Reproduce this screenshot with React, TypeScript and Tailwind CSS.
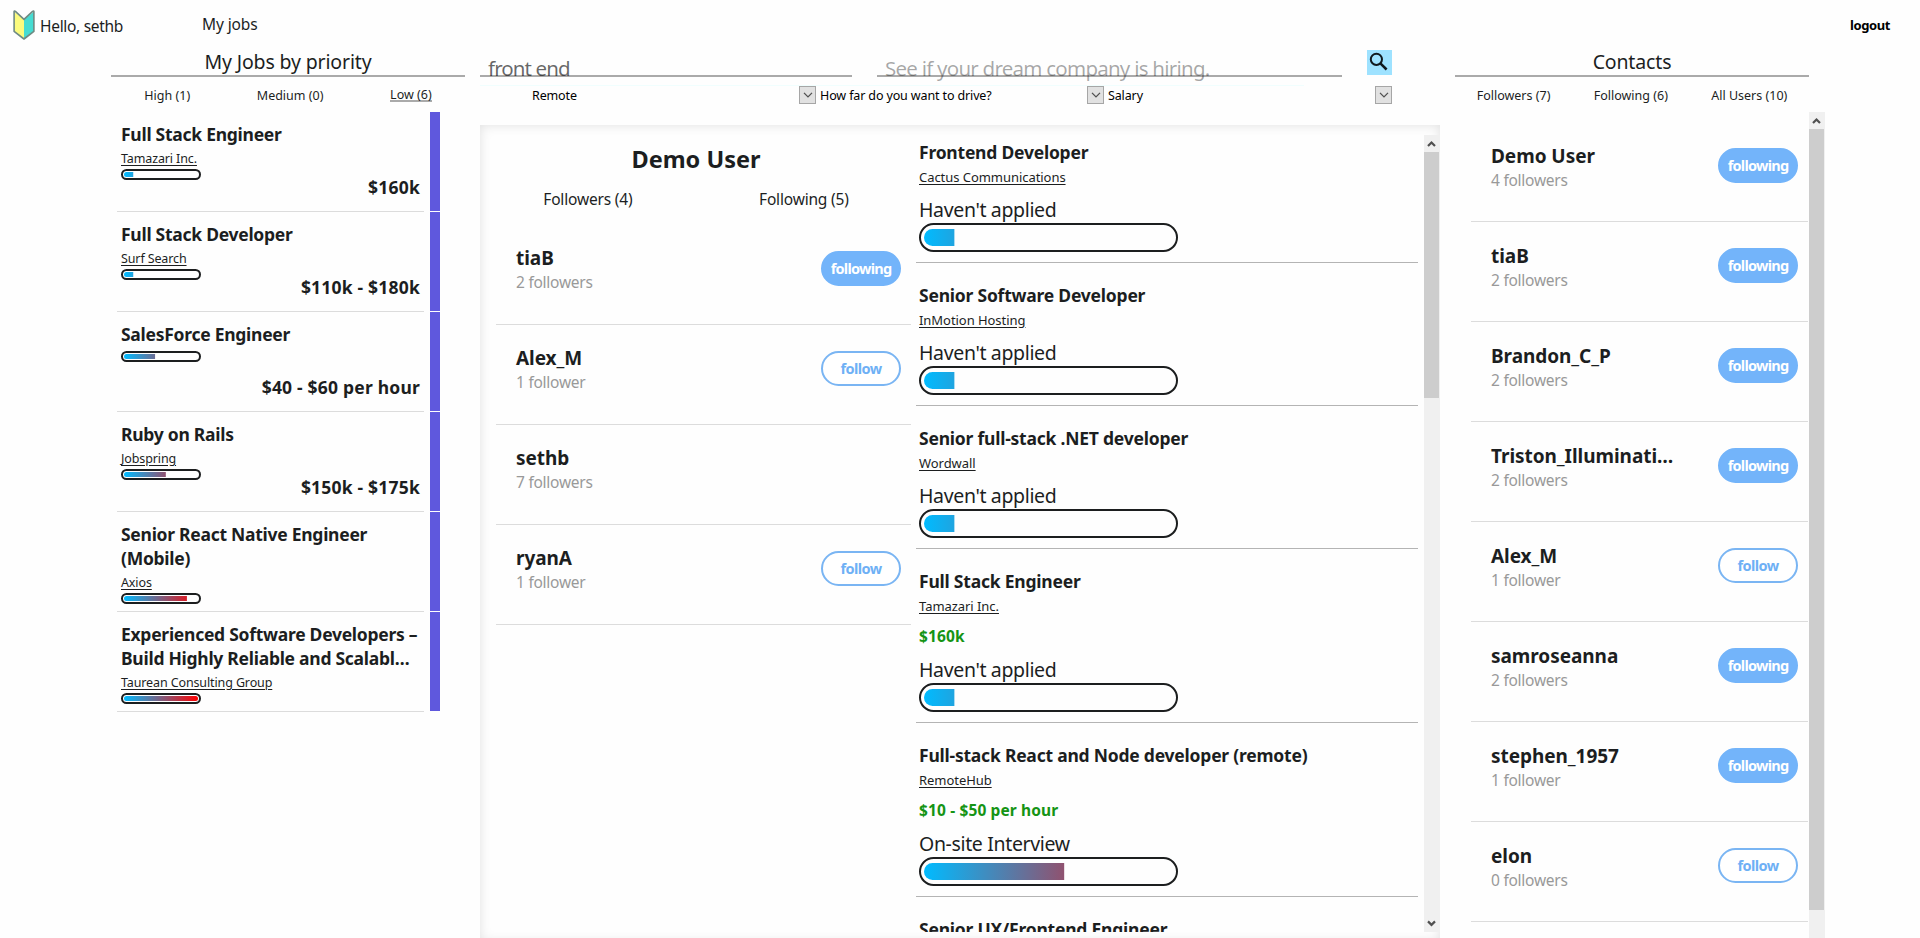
import React from "react";

type Job = { title: string; company?: string; salary?: string; progress: number; status?: string };
type Person = { name: string; followers: string; state?: "following" | "follow" };

const myJobs: Job[] = [
  { title: "Full Stack Engineer", company: "Tamazari Inc.", salary: "$160k", progress: 12.5 },
  { title: "Full Stack Developer", company: "Surf Search", salary: "$110k - $180k", progress: 12.5 },
  { title: "SalesForce Engineer", salary: "$40 - $60 per hour", progress: 42 },
  { title: "Ruby on Rails", company: "Jobspring", salary: "$150k - $175k", progress: 56.5 },
  { title: "Senior React Native Engineer (Mobile)", company: "Axios", progress: 85 },
  {
    title: "Experienced Software Developers – Build Highly Reliable and Scalabl…",
    company: "Taurean Consulting Group",
    progress: 100,
  },
];

const userJobs: Job[] = [
  { title: "Frontend Developer", company: "Cactus Communications", status: "Haven't applied", progress: 12.2 },
  { title: "Senior Software Developer", company: "InMotion Hosting", status: "Haven't applied", progress: 12.2 },
  { title: "Senior full-stack .NET developer", company: "Wordwall", status: "Haven't applied", progress: 12.2 },
  { title: "Full Stack Engineer", company: "Tamazari Inc.", salary: "$160k", status: "Haven't applied", progress: 12.2 },
  {
    title: "Full-stack React and Node developer (remote)",
    company: "RemoteHub",
    salary: "$10 - $50 per hour",
    status: "On-site Interview",
    progress: 56.3,
  },
  { title: "Senior UX/Frontend Engineer", progress: 12.2 },
];

const demoFollowers: Person[] = [
  { name: "tiaB", followers: "2 followers", state: "following" },
  { name: "Alex_M", followers: "1 follower", state: "follow" },
  { name: "sethb", followers: "7 followers" },
  { name: "ryanA", followers: "1 follower", state: "follow" },
];

const contacts: Person[] = [
  { name: "Demo User", followers: "4 followers", state: "following" },
  { name: "tiaB", followers: "2 followers", state: "following" },
  { name: "Brandon_C_P", followers: "2 followers", state: "following" },
  { name: "Triston_Illuminati…", followers: "2 followers", state: "following" },
  { name: "Alex_M", followers: "1 follower", state: "follow" },
  { name: "samroseanna", followers: "2 followers", state: "following" },
  { name: "stephen_1957", followers: "1 follower", state: "following" },
  { name: "elon", followers: "0 followers", state: "follow" },
];

function Logo() {
  return (
    <svg className="mt-[10px] h-[30px] w-[22px] shrink-0" viewBox="0 0 22 30">
      <path d="M1 1.6 11 9.5V28.8L1 21.5Z" fill="#fbfb7d" />
      <path d="M21 1.6 11 9.5V28.8L21 21.5Z" fill="#45dcd2" />
      <path
        d="M1.1 1.6Q1.4.6 2.4 1.3L11 9.4 19.6 1.3Q20.6.6 20.9 1.6V21.4L11 29 1.1 21.4Z"
        fill="none"
        stroke="#6f8b83"
        strokeWidth="1.6"
        strokeLinejoin="round"
      />
    </svg>
  );
}

function Meter({ value, small }: { value: number; small?: boolean }) {
  return (
    <div
      className={
        small
          ? "h-[11px] w-20 shrink-0 rounded-full border-2 border-[#1c1e1f] p-px"
          : "h-[29px] w-[259px] shrink-0 rounded-full border-2 border-[#1c1e1f] px-[3px] py-1"
      }
    >
      <div className="h-full w-full overflow-hidden rounded-full">
        <div
          className="h-full w-full bg-linear-to-r from-[#00bbff] to-[#ff0000] [--tw-gradient-position:to_right]"
          style={{ clipPath: `inset(0 ${100 - value}% 0 0)` }}
        />
      </div>
    </div>
  );
}

function ColumnTitle({ children }: { children: React.ReactNode }) {
  return (
    <h2 className="h-7 w-[354px] border-b-2 border-[#aaaaaa] text-center text-[19.5px] leading-[26px] tracking-[-0.15px]">
      {children}
    </h2>
  );
}

function Tabs({ items, active }: { items: string[]; active?: string }) {
  return (
    <div className="flex h-[35px] w-[354px] justify-around pt-[11px] text-[12.5px] leading-4">
      {items.map((t) => (
        <span key={t} className={t === active ? "-mt-px h-[15px] border-b-2 border-[#aaaaaa] leading-4" : ""}>
          {t}
        </span>
      ))}
    </div>
  );
}

function PriorityJob({ job }: { job: Job }) {
  return (
    <div className="flex h-[100px] justify-between">
      <div className="ml-1.5 flex w-[307px] shrink-0 flex-col items-start border-b border-[#dcdcdc] pt-[10px] pl-1">
        <h3 className="w-[303px] text-[17.5px] leading-6 font-bold tracking-[-0.27px]">{job.title}</h3>
        {job.company ? (
          <a className="mt-1 mb-px text-[12.5px] leading-[18px] tracking-[-0.12px] underline underline-offset-2">
            {job.company}
          </a>
        ) : (
          <div className="h-[5px]" />
        )}
        <Meter value={job.progress} small />
        {job.salary && (
          <p className="mt-auto mr-[4px] mb-[17px] self-end text-[17.5px] leading-[14px] font-bold tracking-[0.2px]">
            {job.salary}
          </p>
        )}
      </div>
      <div className="mr-[25px] h-[99px] w-[10px] shrink-0 bg-[#5f58dd]" />
    </div>
  );
}

function PersonRow({ person, roomy }: { person: Person; roomy?: boolean }) {
  return (
    <div className="flex h-[100px] justify-between border-b border-[#dcdcdc] pr-[10px] pl-5">
      <div className={roomy ? "pt-[22px]" : "pt-[21px]"}>
        <h3 className="text-[19px] leading-6 font-bold tracking-[-0.05px]">{person.name}</h3>
        <p className="text-[15.5px] leading-[25px] tracking-[-0.25px] text-[#999999]">{person.followers}</p>
      </div>
      {person.state && (
        <button
          className={
            person.state === "following"
              ? "mt-[26px] h-[35px] w-20 rounded-full border-2 border-[#73b4fa] bg-[#73b4fa] text-[14.5px] leading-[31px] font-bold tracking-[-0.75px] text-white"
              : "mt-[26px] h-[35px] w-20 rounded-full border-2 border-[#7ab5f3] bg-white text-[14.5px] leading-[31px] font-bold tracking-[-0.6px] text-[#6eb0f5]"
          }
        >
          {person.state}
        </button>
      )}
    </div>
  );
}

function JobCard({ job }: { job: Job }) {
  return (
    <article className="border-b border-[#b4b4b4] pt-5 pb-[10px] pl-[3px]">
      <h3 className="text-[17.5px] leading-6 font-bold tracking-[-0.22px]">{job.title}</h3>
      {job.company && (
        <p className="mt-[3px] text-[13px] leading-5 tracking-[-0.05px]">
          <a className="underline underline-offset-2">{job.company}</a>
        </p>
      )}
      {job.salary && (
        <p className="mt-2 -mb-px text-[15.5px] leading-6 font-bold tracking-[0.13px] text-[#159415]">{job.salary}</p>
      )}
      {job.status && <p className="mt-[11px] mb-px text-[19.5px] leading-6 tracking-[-0.35px]">{job.status}</p>}
      {job.status && <Meter value={job.progress} />}
    </article>
  );
}

function Arrow({ up }: { up?: boolean }) {
  return (
    <svg className="h-[17px] w-4 shrink-0" viewBox="0 0 16 17" fill="none" stroke="#505050" strokeWidth="2.2">
      <path d={up ? "M4 11 7.5 7.5 11 11" : "M4 6.4 7.5 9.9 11 6.4"} />
    </svg>
  );
}

function Select({ label }: { label: string }) {
  return (
    <div className="flex h-[18px] w-72 justify-between pl-1 text-[12.5px] leading-[18px] tracking-[-0.13px] text-black">
      <span className="pt-px">{label}</span>
      <span className="flex h-[18px] w-[17px] items-center justify-center border border-[#a6a6a6] bg-[#e1e1e1]">
        <svg className="h-[6px] w-[10px]" viewBox="0 0 10 6" fill="none" stroke="#505050" strokeWidth="1.3">
          <path d="M1 .9 5 4.9 9 .9" />
        </svg>
      </span>
    </div>
  );
}

export default function App() {
  return (
    <div className="h-[938px] w-[1920px] overflow-hidden bg-[#fefefe] font-['Noto_Sans',sans-serif] text-[#1c1e1f]">
      <header className="flex h-[49px] items-start pr-[30px] pl-[13px] leading-6">
        <Logo />
        <span className="mt-[14px] ml-[5px] w-[162px] text-[15.5px] tracking-[-0.3px]">Hello, sethb</span>
        <a className="mt-3 text-[15.5px] tracking-[-0.1px]">My jobs</a>
        <button className="mt-[13px] ml-auto text-[13px] leading-6 font-bold tracking-[-0.4px] text-black">
          logout
        </button>
      </header>

      <div className="flex gap-[15px] pl-[111px]">
        <aside className="w-[354px] shrink-0">
          <ColumnTitle>My Jobs by priority</ColumnTitle>
          <Tabs items={["High (1)", "Medium (0)", "Low (6)"]} active="Low (6)" />
          {myJobs.map((j) => (
            <PriorityJob key={j.title} job={j} />
          ))}
        </aside>

        <main className="w-[960px] shrink-0">
          <div className="flex h-7 gap-[25px]">
            <div className="h-7 w-[372px] border-b-2 border-[#aaaaaa] pt-[5px] pl-2 text-[20.5px] leading-7 tracking-[-0.9px] text-black/60">
              front end
            </div>
            <div className="h-7 w-[465px] border-b-2 border-[#aaaaaa] pt-[5px] pl-2 text-[20.5px] leading-7 tracking-[-0.76px] text-black/35">
              See if your dream company is hiring.
            </div>
            <button className="mt-px flex h-[25px] w-[25px] items-start bg-[#9ee2ff]">
              <svg className="h-[25px] w-[25px]" viewBox="0 0 25 25" fill="none" stroke="#10191e">
                <circle cx="9.4" cy="9.3" r="5.6" strokeWidth="2" />
                <path d="M13.4 13.3 19.6 19.5" strokeWidth="2.5" />
              </svg>
            </button>
          </div>
          <div className="h-12 pt-2">
            <div className="h-px w-[824px] bg-[#f0fefe]" />
            <div className="ml-12 flex">
              <Select label="Remote" />
              <Select label="How far do you want to drive?" />
              <Select label="Salary" />
            </div>
          </div>

          <div className="flex h-[817px] shadow-[inset_0_0_12px_rgba(0,0,0,0.12)]">
            <section className="w-[432px] shrink-0 pt-[18px]">
              <h1 className="text-center text-[23.5px] leading-8 font-bold">Demo User</h1>
              <div className="mt-3 mb-[14px] flex justify-around text-[15.5px] leading-6 tracking-[-0.18px]">
                <span>Followers (4)</span>
                <span>Following (5)</span>
              </div>
              <div className="ml-4 w-[415px]">
                {demoFollowers.map((p) => (
                  <PersonRow key={p.name} person={p} />
                ))}
              </div>
            </section>
            <section className="mt-[10px] ml-1 flex h-[797px] w-[524px] justify-between overflow-hidden">
              <div className="-mt-[15px] w-[502px]">
                {userJobs.map((j) => (
                  <JobCard key={j.title} job={j} />
                ))}
              </div>
              <div className="flex h-[797px] w-4 flex-col bg-[#f0f0f0]">
                <Arrow up />
                <div className="h-[246px] w-[15px] bg-[#cdcdcd]" />
                <div className="mt-auto flex">
                  <Arrow />
                </div>
              </div>
            </section>
          </div>
        </main>

        <aside className="w-[370px] shrink-0">
          <ColumnTitle>Contacts</ColumnTitle>
          <Tabs items={["Followers (7)", "Following (6)", "All Users (10)"]} />
          <div className="flex h-[826px] justify-between">
            <div className="ml-4 w-[337px] pt-[10px]">
              {contacts.map((p) => (
                <PersonRow key={p.name} person={p} roomy />
              ))}
            </div>
            <div className="flex w-4 flex-col bg-[#f0f0f0]">
              <Arrow up />
              <div className="h-[781px] w-[15px] bg-[#cdcdcd]" />
            </div>
          </div>
        </aside>
      </div>
    </div>
  );
}
